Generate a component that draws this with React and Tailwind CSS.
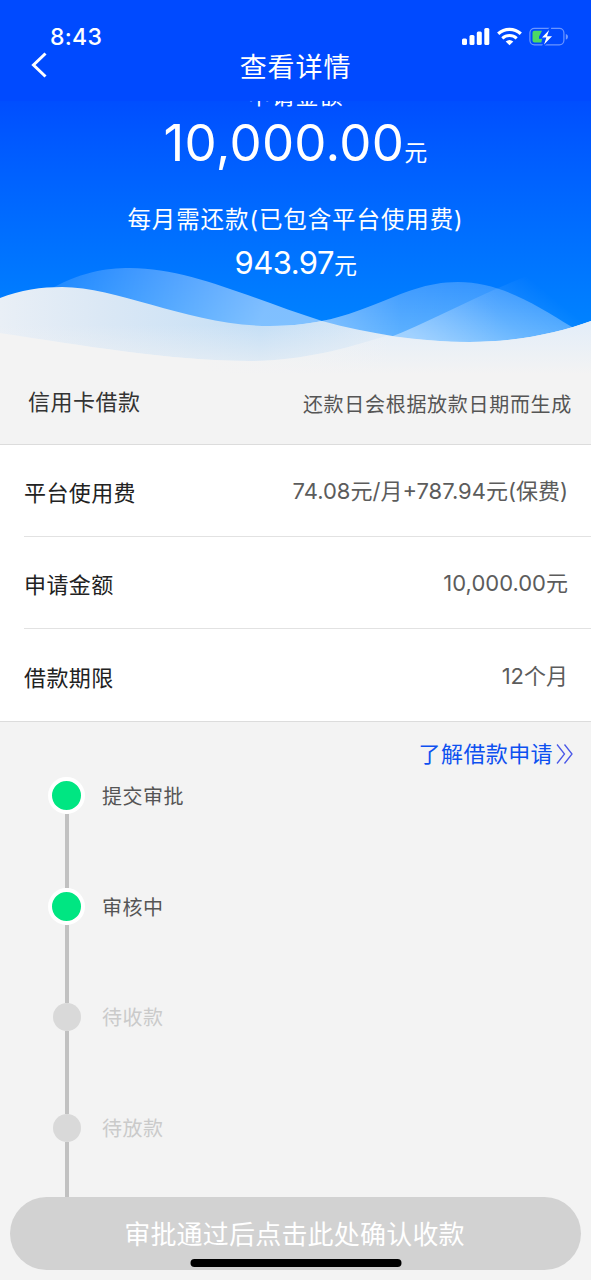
import React from 'react';

const rows = [
  { label: '平台使用费', value: '74.08元/月+787.94元(保费)' },
  { label: '申请金额', value: '10,000.00元' },
  { label: '借款期限', value: '12个月' },
];

const steps = [
  { name: '提交审批', done: true },
  { name: '审核中', done: true },
  { name: '待收款', done: false },
  { name: '待放款', done: false },
];

const StatusIcons = () => (
  <svg className="w-[108px] h-[22px]" viewBox="0 0 108 22" fill="none">
    <g fill="#fff">
      <rect x="2" y="12.5" width="5" height="6.5" rx="1.5" />
      <rect x="9.5" y="9" width="5" height="10" rx="1.5" />
      <rect x="16.8" y="5.5" width="5" height="13.5" rx="1.5" />
      <rect x="24.3" y="2" width="5" height="17" rx="1.5" />
    </g>
    <path d="M38.2 7.7a17 17 0 0 1 22.6 0" stroke="#fff" strokeWidth="3.3" />
    <path d="M42.3 12.3a10.8 10.8 0 0 1 14.4 0" stroke="#fff" strokeWidth="3.1" />
    <path d="M45.7 15.6a5.8 5.8 0 0 1 7.6 0L49.5 19.2z" fill="#fff" />
    <rect x="69.9" y="2.3" width="34" height="16.5" rx="4.5" stroke="#fff" strokeOpacity=".42" strokeWidth="1.2" />
    <path d="M105.8 8v5.5c1.5-.4 2.1-1.5 2.1-2.8S107.3 8.4 105.8 8z" fill="#fff" fillOpacity=".45" />
    <path d="M74.5 4.8h7.5l-3 6v1.7h3.3l-1 3.9h-6.8a2 2 0 0 1-2-2V6.8a2 2 0 0 1 2-2z" fill="#4cd964" />
    <path d="M90.8 1.2 80.3 12.2h5.2l-3.1 9L93.5 9.6h-5.6z" fill="#fff" stroke="#004aff" strokeWidth="1.3" />
  </svg>
);

const Waves = () => (
  <svg className="absolute left-0 bottom-0 w-[591px] h-[115px]" viewBox="0 260 591 115" fill="none">
    <defs>
      <linearGradient id="back" gradientUnits="userSpaceOnUse" x1="60" y1="265" x2="250" y2="345">
        <stop offset="0" stopColor="#fff" stopOpacity=".12" />
        <stop offset="1" stopColor="#fff" stopOpacity=".5" />
      </linearGradient>
      <linearGradient id="hump" gradientUnits="userSpaceOnUse" x1="0" y1="282" x2="0" y2="342">
        <stop offset="0" stopColor="#fff" stopOpacity=".2" />
        <stop offset="1" stopColor="#fff" stopOpacity=".34" />
      </linearGradient>
      <linearGradient id="humpSide" gradientUnits="userSpaceOnUse" x1="300" y1="0" x2="500" y2="0">
        <stop offset="0" stopColor="#fff" stopOpacity=".35" />
        <stop offset=".5" stopColor="#fff" stopOpacity=".06" />
        <stop offset="1" stopColor="#fff" stopOpacity="0" />
      </linearGradient>
      <linearGradient id="beam" gradientUnits="userSpaceOnUse" x1="430" y1="350" x2="505" y2="258">
        <stop offset="0" stopColor="#fff" stopOpacity=".42" />
        <stop offset=".6" stopColor="#fff" stopOpacity=".12" />
        <stop offset="1" stopColor="#fff" stopOpacity="0" />
      </linearGradient>
      <linearGradient id="front" gradientUnits="userSpaceOnUse" x1="0" y1="0" x2="400" y2="0">
        <stop offset="0" stopColor="#e9eff6" />
        <stop offset=".25" stopColor="#dbe8f5" />
        <stop offset=".65" stopColor="#c5dff6" />
        <stop offset="1" stopColor="#dfebf7" />
      </linearGradient>
      <linearGradient id="frontFade" gradientUnits="userSpaceOnUse" x1="0" y1="325" x2="0" y2="365">
        <stop offset="0" stopColor="#f3f3f3" stopOpacity="0" />
        <stop offset="1" stopColor="#f3f3f3" stopOpacity=".6" />
      </linearGradient>
      <linearGradient id="base" gradientUnits="userSpaceOnUse" x1="0" y1="320" x2="0" y2="374">
        <stop offset="0" stopColor="#e2edf9" />
        <stop offset="1" stopColor="#f3f3f3" />
      </linearGradient>
      <linearGradient id="baseLeft" gradientUnits="userSpaceOnUse" x1="200" y1="0" x2="392" y2="0">
        <stop offset="0" stopColor="#f3f3f3" />
        <stop offset="1" stopColor="#f3f3f3" stopOpacity="0" />
      </linearGradient>
    </defs>
    <path d="M45 292C80 272 105 268 130 268C190 268 255 300 322.1 321L300 350H45z" fill="url(#back)" />
    <path d="M270 326C365 326 395 282 458 282C500 282 535 304 572 327L560 350H300z" fill="url(#hump)" />
    <path d="M270 326C365 326 395 282 458 282C500 282 535 304 572 327L560 350H300z" fill="url(#humpSide)" />
    <path d="M388 338C430 322 475 296 530 275L575 258L591 330V350H388z" fill="url(#beam)" />
    <path d="M0 298C20 290 42 287 62 287C120 287 190 326 270 326C290 326 307 324.1 322.1 321C370 334 420 342 470 342C520 342 560 332 591 321V375H0z" fill="url(#front)" />
    <path d="M0 298C20 290 42 287 62 287C120 287 190 326 270 326C290 326 307 324.1 322.1 321C370 334 420 342 470 342V375H0z" fill="url(#frontFade)" />
    <path d="M0 333C80 345 170 361 250 361C300 361 345 349 386 335.8C418 340.5 445 342 470 342C520 342 560 332 591 321V375H0z" fill="url(#base)" />
    <path d="M0 333C80 345 170 361 250 361C300 361 345 349 386 335.8L392 375H0z" fill="url(#baseLeft)" />
  </svg>
);

const App = () => {
  return (
    <div className="w-[591px] h-[1280px] overflow-hidden flex flex-col bg-[#f3f3f3] text-[#222] font-[395] font-['Inter','Noto_Sans_CJK_SC',sans-serif]">
      <header className="h-[101px] shrink-0 bg-[#004aff] text-white">
        <div className="flex justify-between pl-[50px] pr-[23px] pt-[26px]">
          <span className="text-[23px] leading-[22px] font-[550] tracking-[0.3px]">8:43</span>
          <StatusIcons />
        </div>
        <div className="flex items-center h-[38px]">
          <svg className="w-4 h-[26px] ml-[31px] -mt-[5px]" viewBox="0 0 16 26" fill="none" stroke="#fff" strokeWidth="3">
            <path d="M14.5 1.5 2.5 13l12 11.5" />
          </svg>
          <h1 className="flex-1 pt-[2px] pr-[47px] text-center text-[27px] leading-[38px] tracking-[0.9px]">查看详情</h1>
        </div>
      </header>

      <section className="relative h-[274px] shrink-0 overflow-hidden bg-linear-to-b from-[#004eff] to-[#008cff] text-white text-center">
        <Waves />
        <div className="relative">
          <p className="-mt-[21px] text-[23px] leading-[32px] tracking-[1px]">申请金额</p>
          <p className="mt-[1px] text-[51px] leading-[60px] tracking-[0.3px]">
            <span className="font-normal">10,000.00</span>
            <span className="text-[23px]">元</span>
          </p>
          <p className="mt-[20px] text-[23.5px] leading-[34px] tracking-[0.9px]">每月需还款(已包含平台使用费)</p>
          <p className="mt-[6px] text-[31px] leading-[40px] tracking-[-0.5px]">
            <span className="font-normal">943.97</span>
            <span className="text-[23px]">元</span>
          </p>
        </div>
      </section>

      <div className="h-[70px] shrink-0 flex items-start justify-between pl-7 pr-[19px] border-b border-[#dcdcdc]">
        <span className="pt-[11px] text-[22px] leading-8 text-[#333] tracking-[0.5px]">信用卡借款</span>
        <span className="pt-[14px] text-[20px] leading-8 text-[#555] tracking-[0.7px]">还款日会根据放款日期而生成</span>
      </div>

      <ul className="shrink-0 bg-white border-b border-[#dcdcdc] pl-6">
        {rows.map((row, idx) => (
          <li
            key={row.label}
            className={`flex items-center justify-between h-[92px] pt-[2px] pr-[23px] text-[22px] ${idx < rows.length - 1 ? 'border-b border-[#e2e2e2]' : ''}`}
          >
            <span className="pt-1 tracking-[0.4px]">{row.label}</span>
            <span className="text-[#5c5c5c] tracking-[0px]">{row.value}</span>
          </li>
        ))}
      </ul>

      <div className="h-[64px] shrink-0 flex items-center justify-end pr-[17px] text-[22px] text-[#0d50f0] tracking-[0.4px]">
        <span className="pt-[1px]">了解借款申请</span>
        <svg className="w-[18px] h-[22px] ml-[3px]" viewBox="0 0 18 22" fill="none" stroke="#4a58e8" strokeWidth="1.3">
          <path d="M1 1.5 8.5 11 1 20.5M8.5 1.5 16 11l-7.5 9.5" />
        </svg>
      </div>

      <ol className="flex-1 min-h-0 overflow-hidden -mt-[9px] pl-[48px]">
        {steps.map((step) => (
          <li key={step.name} className="flex h-[110.7px]">
            <div className="w-[37px] flex flex-col items-center">
              {step.done ? (
                <i className="w-[37px] h-[37px] shrink-0 rounded-full bg-[#00e682] border-[4.5px] border-white" />
              ) : (
                <i className="w-7 h-7 my-[4.5px] shrink-0 rounded-full bg-[#d9d9d9]" />
              )}
              <i className={`w-1 bg-[#c1c1c1] flex-1 ${step.done ? '' : '-mt-[4.5px]'} ${step.name === '审核中' || step.name === '待收款' ? '-mb-[4.5px]' : ''}`} />
            </div>
            <span className={`ml-[17px] pt-[2px] text-[20px] leading-[37px] tracking-[0.5px] ${step.done ? 'text-[#555]' : 'text-[#cacaca]'}`}>
              {step.name}
            </span>
          </li>
        ))}
      </ol>

      <footer className="shrink-0 h-[83px] px-[10px]">
        <button className="relative block w-full h-[73px] pt-[2px] pr-[2px] rounded-full bg-[#d2d2d2] text-white text-[26px] tracking-[0.2px]">
          审批通过后点击此处确认收款
          <i className="absolute left-1/2 -translate-x-1/2 bottom-[3px] w-[211px] h-2 rounded-full bg-black" />
        </button>
      </footer>
    </div>
  );
};

export default App;
